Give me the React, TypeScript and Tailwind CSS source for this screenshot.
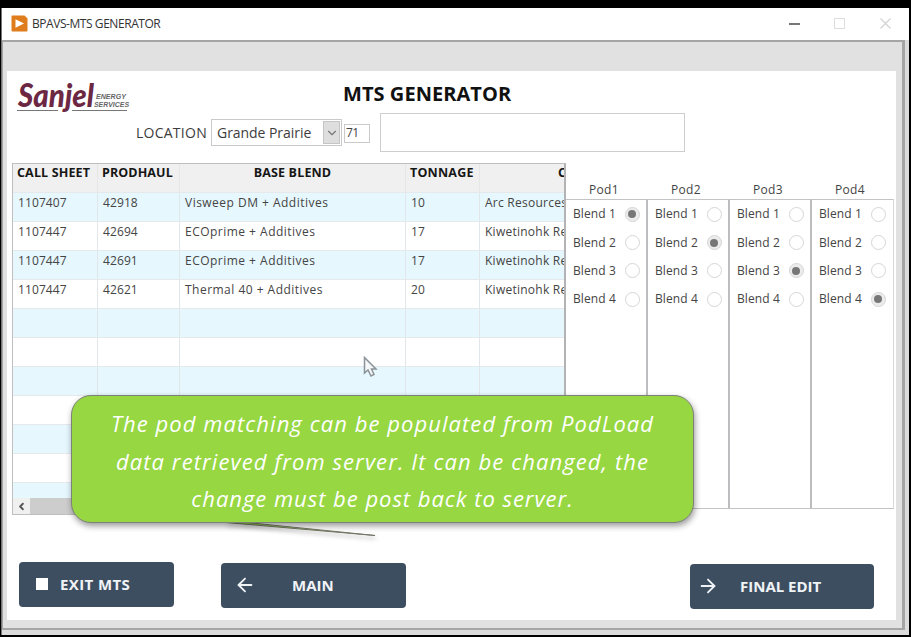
import React from "react";
import { ArrowLeft, ArrowRight, ChevronDown, ChevronLeft } from "lucide-react";

const rows = [
  ["1107407", "42918", "Visweep DM + Additives", "10", "Arc Resources"],
  ["1107447", "42694", "ECOprime + Additives", "17", "Kiwetinohk Re"],
  ["1107447", "42691", "ECOprime + Additives", "17", "Kiwetinohk Re"],
  ["1107447", "42621", "Thermal 40 + Additives", "20", "Kiwetinohk Re"],
  ...Array.from({ length: 7 }, () => ["", "", "", "", ""]),
];

const grid = "grid grid-cols-[85px_82px_226px_74px_200px]";

function TitleBar() {
  return (
    <header className="flex h-[32px] shrink-0 items-center bg-white pl-[9px] pr-[18px] pb-[1px]">
      <svg className="h-[17px] w-[17px]" viewBox="0 0 17 17">
        <path d="M1 .5H13.5L16.5 3.500V15.500a1 1 0 0 1-1 1H1.500a1 1 0 0 1-1-1V1Z" fill="#df7d1c" />
        <path d="M4.500 4.300 13 8.500 4.500 12.700Z" fill="#fff" />
      </svg>
      <span className="ml-[4px] text-[12px] tracking-[-0.44px] text-[#333]">BPAVS-MTS GENERATOR</span>
      <div className="ml-auto flex items-center">
        <div className="h-[2px] w-[11px] bg-[#777]" />
        <div className="ml-[34px] h-[11px] w-[11px] border border-[#ddd]" />
        <svg className="ml-[35px] h-[11px] w-[11px]" viewBox="0 0 11 11" stroke="#d2d2d2" strokeWidth="1.200">
          <path d="M.5 .5 10.500 10.500M10.500 .5.5 10.500" />
        </svg>
      </div>
    </header>
  );
}

function Logo() {
  return (
    <svg className="h-[42px] w-[116px] shrink-0" viewBox="0 0 116 42">
      <text x="1" y="32" fontSize="32" fontFamily="Lato, sans-serif" fontWeight="900" fontStyle="italic" fill="#6c2843" textLength="76" lengthAdjust="spacingAndGlyphs">
        Sanjel
      </text>
      <g fontSize="7" fontFamily="Liberation Sans, sans-serif" fontWeight="700" fontStyle="italic" fill="#666">
        <text x="79" y="24" textLength="30" lengthAdjust="spacingAndGlyphs">ENERGY</text>
        <text x="77" y="31.500" textLength="35" lengthAdjust="spacingAndGlyphs">SERVICES</text>
      </g>
      <path d="M-1 35.500H41M55 35.500H110" stroke="#777" strokeWidth="1.200" />
    </svg>
  );
}

function BlendTable() {
  return (
    <section className="flex h-[352px] w-[554px] shrink-0 flex-col overflow-hidden border border-[#bfbfbf] border-r-2 border-r-[#b3b3b6]">
      <div className={`${grid} h-[28px] shrink-0 bg-[#f0f0f0] text-[12.500px] leading-[18px] font-bold text-[#161616]`}>
        <div className="border-r border-[#e6e6e6] pl-[4px] tracking-[0.15px] whitespace-nowrap">CALL SHEET</div>
        <div className="border-r border-[#e6e6e6] pl-[4px] tracking-[0.1px]">PRODHAUL</div>
        <div className="border-r border-[#e6e6e6] text-center tracking-[0.15px]">BASE BLEND</div>
        <div className="border-r border-[#e6e6e6] pl-[4px] tracking-[0.2px]">TONNAGE</div>
        <div className="pl-[78px]">C</div>
      </div>
      <div className="h-[306px] shrink-0 overflow-hidden">
        {rows.map((row, i) => (
          <div
            key={i}
            className={`${grid} h-[29px] border-t border-[#e6e9eb] text-[12px] leading-[20px] text-[#444] ${i % 2 === 0 ? "bg-[#e6f7fe]" : "bg-white"}`}
          >
            {row.map((cell, j) => (
              <div
                key={j}
                className={`border-r border-[#e0e6e9] pl-[5px] whitespace-nowrap ${j === 2 ? "tracking-[0.48px]" : j === 4 ? "tracking-[0.25px]" : "tracking-[0.1px]"}`}
              >
                {cell}
              </div>
            ))}
          </div>
        ))}
      </div>
      <div className="flex h-[16px] shrink-0 bg-[#cdcdcd]">
        <div className="flex w-[17px] items-center justify-center bg-[#f0f0f0] text-[#555]">
          <ChevronLeft size={11} strokeWidth={4} />
        </div>
      </div>
    </section>
  );
}

function Pods() {
  return (
    <section className="flex">
      {[1, 2, 3, 4].map((pod) => (
        <div key={pod} className="w-[82px]">
          <div className="h-[36px] pt-[18px] pr-[6px] text-center text-[12px] leading-[18px] tracking-[0.3px] text-[#444]">Pod{pod}</div>
          <div
            className={`flex h-[310px] flex-col border-t border-b border-[#c4c4c6] ${pod === 4 ? "border-r border-r-[#d8d8d8]" : "border-r-2 border-r-[#bdbdc0]"}`}
          >
            {[1, 2, 3, 4].map((blend) => (
              <div key={blend} className="flex h-[28.400px] items-center pl-[7px] text-[12px] leading-[16px] text-[#444]">
                <span className="w-[51.500px] tracking-[0.1px] whitespace-nowrap">Blend {blend}</span>
                <span
                  className={`flex h-[15px] w-[15px] items-center justify-center rounded-full border border-[#d6d6d6] ${pod === blend ? "bg-[#ececec]" : "bg-white"}`}
                >
                  {pod === blend && <span className="h-[8px] w-[8px] rounded-full bg-[#777]" />}
                </span>
              </div>
            ))}
          </div>
        </div>
      ))}
    </section>
  );
}

function Callout() {
  return (
    <div className="absolute top-[324px] left-[64px] h-[128px] w-[623px]">
      <svg className="absolute top-[122px] left-[140px] h-[24px] w-[180px] drop-shadow-[1px_3px_2px_rgba(0,0,0,0.3)]" viewBox="0 0 180 24">
        <path d="M15 5.500 164 18.500 36 5.500Z" fill="#96d742" stroke="#747568" strokeWidth="1" />
      </svg>
      <div className="relative flex h-full flex-col items-center rounded-[20px] border border-[#7d8278] bg-[#96d742] pt-[9px] text-[22px] leading-[37.500px] text-white italic shadow-[1px_3px_6px_rgba(0,0,0,0.4)] whitespace-nowrap">
        <span className="tracking-[1.06px]">The pod matching can be populated from PodLoad</span>
        <span className="tracking-[1.08px]">data retrieved from server. It can be changed, the</span>
        <span className="tracking-[0.97px]">change must be post back to server.</span>
      </div>
    </div>
  );
}

export default function App() {
  return (
    <div className="h-[637px] w-[911px] overflow-hidden bg-black pt-[8px] pr-[2px] pb-[2px] pl-[1px] font-['Open_Sans','Noto_Sans',sans-serif]">
      <div className="flex h-full flex-col border-l border-[#777] bg-[#dcdcdc]">
        <TitleBar />
        <div className="mr-[4px] mb-[5px] min-h-0 flex-1 border-t-2 border-r-[3px] border-b-2 border-l border-[#a5a5a5] bg-[#e1e1e1] pt-[29px] pr-[6px] pb-[8px] pl-[4px]">
          <main className="relative flex h-full flex-col bg-white">
            <div className="relative h-[92px] shrink-0 pl-[10px]">
              <div className="flex h-[45px]">
                <div className="pt-[4px]"><Logo /></div>
                <h1 className="ml-[210px] pt-[8px] text-[20px] leading-[30px] font-bold tracking-[0.05px] whitespace-nowrap text-[#111]">MTS GENERATOR</h1>
              </div>
              <div className="-mt-[3px] flex h-[39px] items-start pl-[119px]">
                <span className="w-[75px] pt-[10px] text-[14px] leading-[20px] tracking-[0.25px] whitespace-nowrap text-[#3d3d3d]">LOCATION</span>
                <div className="mt-[6px] flex h-[27px] w-[131px] border border-[#cacaca] bg-white p-[1px]">
                  <span className="flex-1 pl-[4px] text-[14px] leading-[24px] tracking-[-0.05px] whitespace-nowrap text-[#3d3d3d]">Grande Prairie</span>
                  <span className="flex w-[17px] items-center justify-center border border-[#c5c5c5] bg-[#dedede] text-[#777]">
                    <ChevronDown size={14} />
                  </span>
                </div>
                <div className="mt-[11px] ml-[2px] h-[19px] w-[26px] border border-[#cacaca] pl-[1px] text-[12px] leading-[16px] tracking-[-0.6px] text-[#444]">71</div>
                <div className="ml-[10px] h-[39px] w-[305px] border border-[#cecece]" />
              </div>
            </div>
            <div className="flex pl-[5px]">
              <BlendTable />
              <Pods />
            </div>
            <footer className="flex pt-[47px] pl-[12px] text-[15px] font-bold text-[#f0f3f6]">
              <button className="flex h-[45px] w-[155px] items-center rounded-[4px] bg-[#3d4e61] pb-[1px] pl-[17px]">
                <span className="h-[12px] w-[12px] bg-white" />
                <span className="ml-[12px] tracking-[0.4px]">EXIT MTS</span>
              </button>
              <button className="mt-[1px] ml-[47px] flex h-[45px] w-[185px] items-center rounded-[4px] bg-[#3d4e61] pb-[1px] pl-[13px]">
                <ArrowLeft size={22} strokeWidth={2} />
                <span className="ml-[36px]">MAIN</span>
              </button>
              <button className="mt-[2px] ml-[284px] flex h-[45px] w-[184px] items-center rounded-[4px] bg-[#3d4e61] pb-[1px] pl-[7px]">
                <ArrowRight size={22} strokeWidth={2} />
                <span className="ml-[21px]">FINAL EDIT</span>
              </button>
            </footer>
            <svg className="absolute top-[285px] left-[356px] h-[23px] w-[16px]" viewBox="0 0 16 23">
              <path d="M1.500 1.500V17L5 14l3 6 3-1.500-2.500-5.500h4.500Z" fill="#f5f7f8" stroke="#8a9499" strokeWidth="1.500" />
            </svg>
            <Callout />
          </main>
        </div>
      </div>
    </div>
  );
}
